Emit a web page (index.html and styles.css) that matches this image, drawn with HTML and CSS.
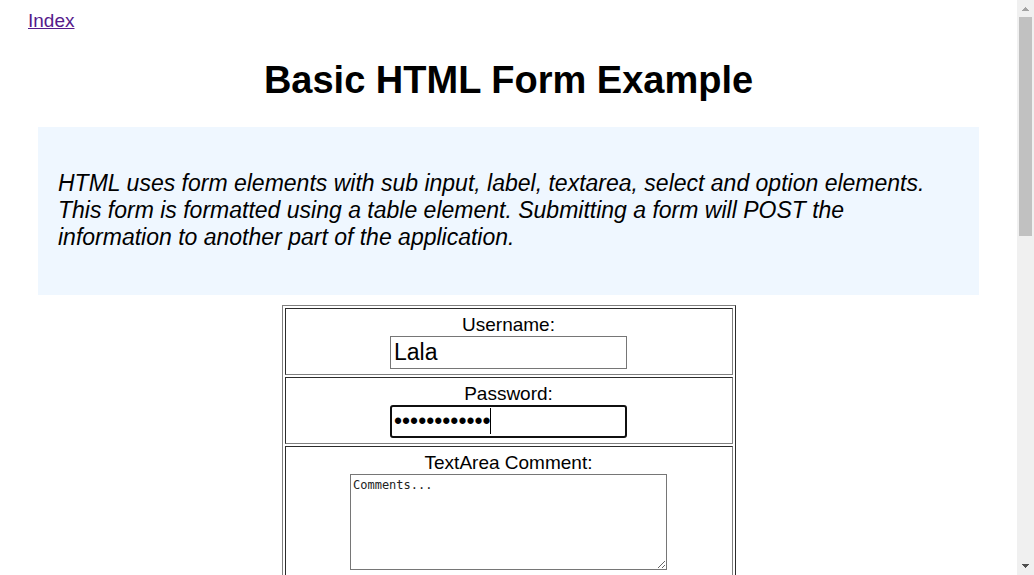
FILE: index.html
```html
<!DOCTYPE html>
<html lang="en">
<head>
<meta charset="utf-8">
<title>Basic HTML Form Example</title>
<link rel="stylesheet" href="styles.css">
</head>
<body>
<div class="viewport">
  <main class="page">
    <nav class="nav"><a class="nav-link" href="#">Index</a></nav>
    <h1 class="title">Basic HTML Form Example</h1>
    <section class="intro">
      <p class="intro-text">HTML uses form elements with sub input, label, textarea, select and option elements. This form is formatted using a table element. Submitting a form will POST the information to another part of the application.</p>
    </section>
    <form class="form">
      <table class="form-table">
        <tbody>
          <tr><td class="cell">
            <label class="label" for="username">Username:</label>
            <input class="field" id="username" type="text" value="Lala">
          </td></tr>
          <tr><td class="cell">
            <label class="label" for="password">Password:</label>
            <div class="field-wrap">
              <input class="field field-active" id="password" type="password" value="abcdefghijkl" autofocus>
              <span class="caret"></span>
            </div>
          </td></tr>
          <tr><td class="cell cell-last">
            <label class="label" for="comment">TextArea Comment:</label>
            <textarea class="comment" id="comment">Comments...</textarea>
          </td></tr>
        </tbody>
      </table>
    </form>
  </main>
  <div class="scrollbar" aria-hidden="true">
    <svg class="arrow" width="17" height="17" viewBox="0 0 17 17" shape-rendering="crispEdges"><path fill="#a3a3a3" d="M8 7h1v1h1v1h1v1h1v1H5v-1h1V9h1V8h1z"/></svg>
    <div class="thumb"></div>
    <svg class="arrow arrow-down" width="17" height="17" viewBox="0 0 17 17" shape-rendering="crispEdges"><path fill="#505050" d="M5 6h7v1h-1v1h-1v1H9v1H8V9H7V8H6V7H5z"/></svg>
  </div>
</div>
</body>
</html>
```
FILE: styles.css
```css
* {
  box-sizing: border-box;
}

body {
  margin: 0;
  background: #fff;
  color: #000;
  font-family: Arial, "Liberation Sans", sans-serif;
  font-size: 19px;
  line-height: 22px;
}

.viewport {
  display: flex;
  height: 100vh;
  overflow: hidden;
}

.page {
  flex: 1;
  min-width: 0;
  padding: 10px 38px 0;
  overflow: hidden;
}

.nav {
  margin-left: -10px;
}

.nav-link {
  color: #551a8b;
}

.title {
  margin: 26px 0 25px;
  font-size: 38px;
  line-height: 44px;
  text-align: center;
}

.intro {
  padding: 43px 20px 44px;
  background: #eff7ff;
}

.intro-text {
  margin: 0;
  font-size: 23px;
  font-style: italic;
  line-height: 27px;
}

.form {
  margin-top: 10px;
}

.form-table {
  width: 454px;
  max-width: 100%;
  margin: 0 auto;
  border: 1px solid;
  border-color: #808080 #2c2c2c #2c2c2c #808080;
  border-spacing: 2px;
}

.cell {
  padding: 5px;
  border: 1px solid;
  border-color: #2c2c2c #808080 #808080 #2c2c2c;
}

.cell-last {
  padding-bottom: 24px;
}

.label {
  display: block;
  text-align: center;
}

.field {
  display: block;
  width: 237px;
  height: 33px;
  margin: 0 auto;
  padding: 1px 3px;
  border: 1px solid #767676;
  background: #fff;
  color: #000;
  font: 23px Arial, "Liberation Sans", sans-serif;
}

.field-wrap {
  position: relative;
  width: 237px;
  margin: 0 auto;
}

.field-active {
  padding: 0 2px;
  border: 2px solid #101010;
  border-radius: 3px;
  outline: 0;
  caret-color: transparent;
}

/* Insertion point after the last bullet */
.caret {
  position: absolute;
  top: 3px;
  left: 100px;
  width: 1px;
  height: 26px;
  background: #000;
}

.comment {
  display: block;
  width: 317px;
  height: 96px;
  margin: 0 auto;
  padding: 3px 2px;
  border: 1px solid #767676;
  color: #222;
  font: 12px/15px "DejaVu Sans Mono", monospace;
}

.scrollbar {
  display: flex;
  flex-direction: column;
  width: 17px;
  background: #f0f0f0;
}

.arrow {
  flex: none;
  display: block;
}

.arrow-down {
  margin-top: auto;
}

.thumb {
  height: 38vh;
  margin: 0 2px;
  background: #c1c1c1;
}
```
